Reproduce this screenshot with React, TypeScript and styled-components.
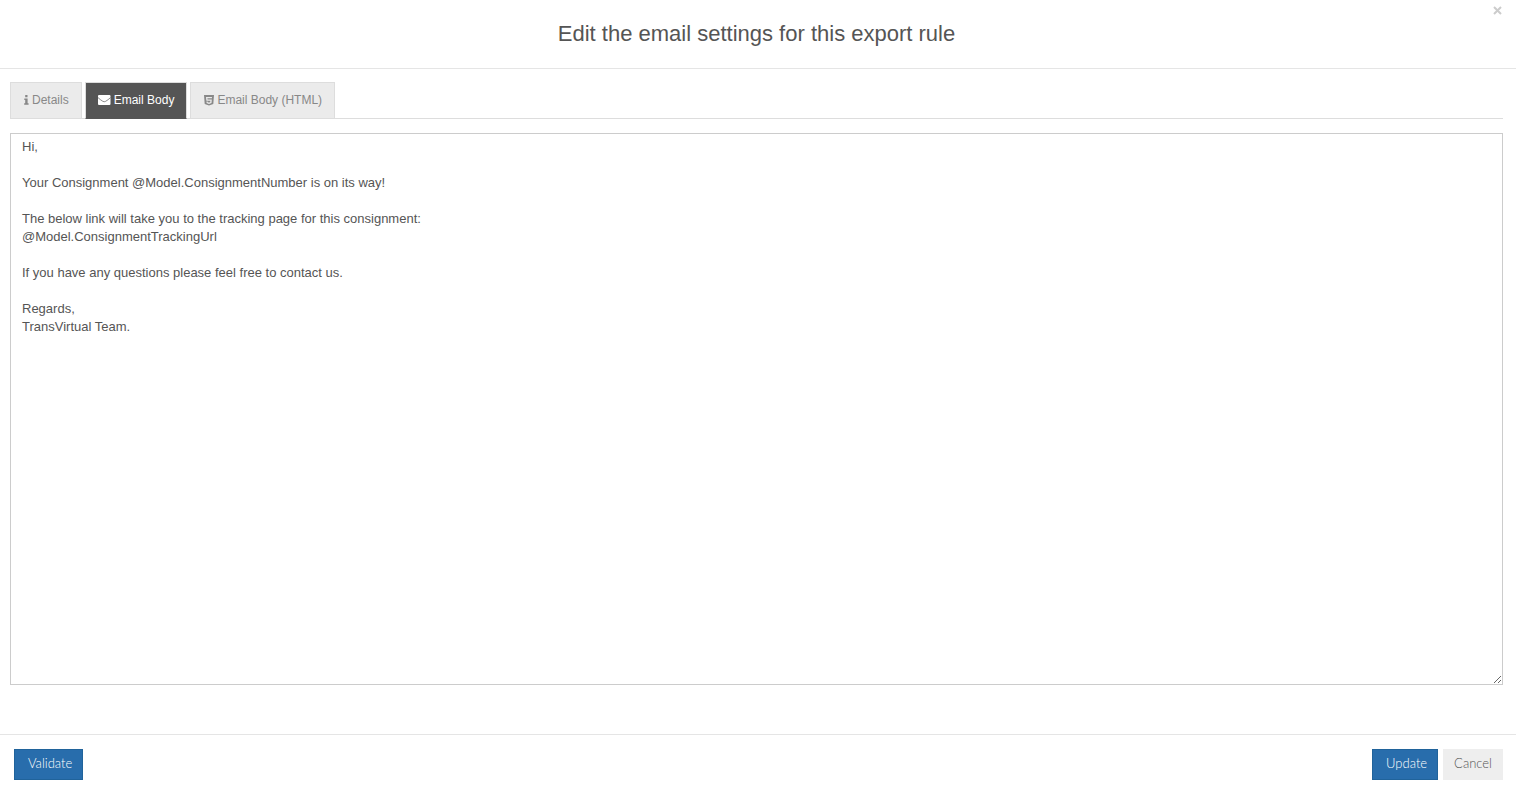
import React, { useState } from "react";
import styled, { createGlobalStyle, css } from "styled-components";

const GlobalStyle = createGlobalStyle`
  *, *::before, *::after { box-sizing: border-box; }
  body {
    margin: 0;
    background: #fff;
    color: #555;
    font-family: "Liberation Sans", Arial, sans-serif;
    font-size: 13px;
    line-height: 18px;
  }
`;

const Dialog = styled.form`
  display: flex;
  flex-direction: column;
  min-height: 100vh;
`;

const Header = styled.header`
  position: relative;
  padding: 19px 14px 20px 11px;
  border-bottom: 1px solid #e5e5e5;
  text-align: center;
`;

const Title = styled.h1`
  margin: 0;
  font-size: 22px;
  font-weight: 400;
  line-height: 29px;
`;

const CloseButton = styled.button`
  position: absolute;
  top: 4px;
  right: 12px;
  display: flex;
  padding: 2px;
  border: 0;
  background: none;
  color: #ccc;
  cursor: pointer;
`;

const Content = styled.main`
  flex: 1;
  display: flex;
  flex-direction: column;
  padding: 13px 13px 49px 10px;
`;

const TabList = styled.div`
  display: flex;
  gap: 3px;
  margin-bottom: 14px;
  border-bottom: 1px solid #ddd;
`;

const Tab = styled.button<{ $active: boolean }>`
  display: flex;
  align-items: center;
  gap: 3px;
  height: 37px;
  margin-bottom: -1px;
  padding: 0 12px 1px 13px;
  border: 1px solid #ddd;
  background: #ebebeb;
  color: #888;
  font: 12px/18px "Liberation Sans", Arial, sans-serif;
  cursor: pointer;
  ${(p) =>
    p.$active &&
    css`
      padding: 0 12px 1px;
      border-bottom-color: #555;
      background: #555;
      color: #fff;
    `}
`;

const BodyEditor = styled.textarea`
  flex: 1;
  display: block;
  width: 100%;
  padding: 4px 11px;
  border: 1px solid #ccc;
  border-radius: 0;
  outline: 0;
  background: #fff;
  color: #555;
  font: 13px/18px "Liberation Sans", Arial, sans-serif;
  resize: both;
`;

const Footer = styled.footer`
  display: flex;
  justify-content: space-between;
  padding: 14px 13px 8px 14px;
  border-top: 1px solid #e5e5e5;
`;

const Actions = styled.div`
  display: flex;
  gap: 5px;
`;

const Button = styled.button<{ $primary?: boolean }>`
  height: 31px;
  padding: 0 10px 4px;
  border: 1px solid #eee;
  background: #eee;
  color: #555;
  font: 300 13px/18px Lato, sans-serif;
  cursor: pointer;
  ${(p) =>
    p.$primary &&
    css`
      padding: 0 10px 4px 13px;
      border-color: #20639b;
      background: #286dac;
      color: #fff;
      -webkit-text-stroke: 0;
    `}
`;

const InfoIcon = () => (
  <svg width="5" height="12" viewBox="0 0 5 12" fill="currentColor" aria-hidden="true">
    <path d="M1.200 1h2.300v2.200H1.200zM.3 4.500h3.300v4.700h1v1.600H.2V9.200h1V6.100H.3z" />
  </svg>
);

const EnvelopeIcon = () => (
  <svg width="13" height="12" viewBox="0 0 13 12" fill="none" aria-hidden="true">
    <rect y="1" width="12.500" height="10" rx="1" fill="currentColor" />
    <path d="M0 3.600c1.600 1.700 3.300 2.600 4.800 3.700q1.400.9 2.900 0c1.500-1.100 3.200-2 4.800-3.700" stroke="#555" strokeOpacity=".75" strokeWidth=".9" />
  </svg>
);

const Html5Icon = () => (
  <svg width="10" height="12" viewBox="0 0 10 12" fill="currentColor" aria-hidden="true">
    <path
      fillRule="evenodd"
      d="M0 1h10l-.7 9.100L5 11.600.7 10.100zM2 3l.4 3.700h4l-.2 1.500L5 8.600l-1.300-.4v-.6H2.500l.1 1.500L5 9.900l2.500-.8.300-3.500H3.500L3.400 4.200H7.900L8 3z"
    />
  </svg>
);

const CloseIcon = () => (
  <svg width="9" height="9" viewBox="0 0 9 9" fill="none" stroke="currentColor" strokeWidth="2" aria-hidden="true">
    <path d="M1 1l7 7M8 1l-7 7" />
  </svg>
);

const tabs = [
  { id: "details", label: "Details", Icon: InfoIcon },
  { id: "body", label: "Email Body", Icon: EnvelopeIcon },
  { id: "html", label: "Email Body (HTML)", Icon: Html5Icon },
];

const defaultBody = `Hi,

Your Consignment @Model.ConsignmentNumber is on its way!

The below link will take you to the tracking page for this consignment:
@Model.ConsignmentTrackingUrl

If you have any questions please feel free to contact us.

Regards,
TransVirtual Team.`;

export default function App() {
  const [active, setActive] = useState("body");
  const [body, setBody] = useState(defaultBody);

  return (
    <>
      <GlobalStyle />
      <Dialog onSubmit={(e) => e.preventDefault()}>
        <Header>
          <Title>Edit the email settings for this export rule</Title>
          <CloseButton type="button" aria-label="Close">
            <CloseIcon />
          </CloseButton>
        </Header>
        <Content>
          <TabList role="tablist">
            {tabs.map(({ id, label, Icon }) => (
              <Tab
                key={id}
                type="button"
                role="tab"
                aria-selected={active === id}
                $active={active === id}
                onClick={() => setActive(id)}
              >
                <Icon />
                {label}
              </Tab>
            ))}
          </TabList>
          <BodyEditor
            aria-label="Email Body"
            spellCheck={false}
            value={body}
            onChange={(e) => setBody(e.target.value)}
          />
        </Content>
        <Footer>
          <Button type="button" $primary>
            Validate
          </Button>
          <Actions>
            <Button type="submit" $primary>
              Update
            </Button>
            <Button type="button">Cancel</Button>
          </Actions>
        </Footer>
      </Dialog>
    </>
  );
}
